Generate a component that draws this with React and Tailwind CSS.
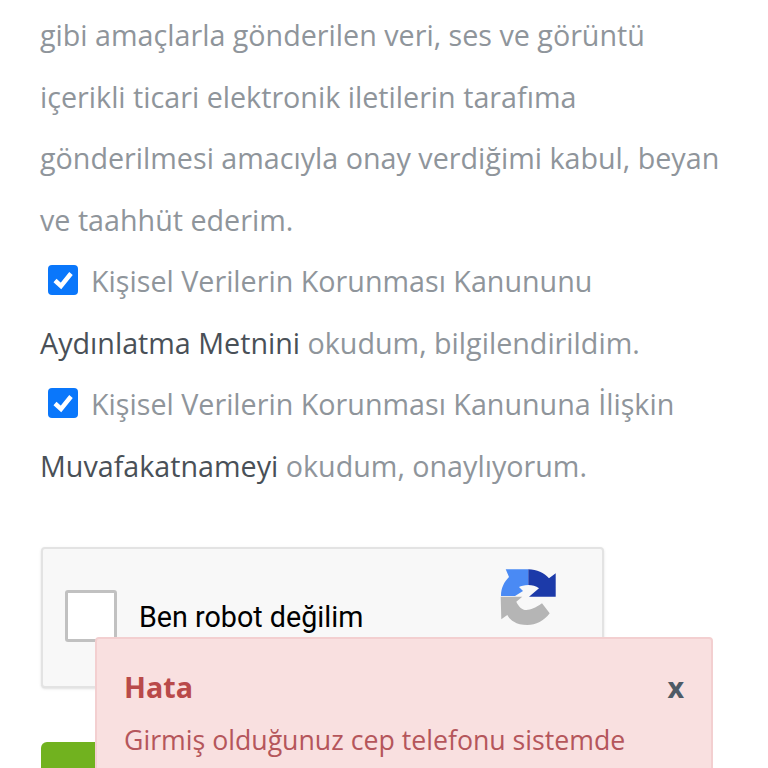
export default function App() {
  return (
    <div className="relative h-[768px] w-[768px] overflow-hidden bg-white font-['Open_Sans',sans-serif] text-[28.7px] leading-[61.5px] text-[#8f959b]">
      <div className="px-[40px] mt-[4px]">
        {/* Consent text */}
        <p>gibi amaçlarla gönderilen veri, ses ve görüntü</p>
        <p>içerikli ticari elektronik iletilerin tarafıma</p>
        <p>gönderilmesi amacıyla onay verdiğimi kabul, beyan</p>
        <p>ve taahhüt ederim.</p>
        <p>
          <Check />
          Kişisel Verilerin Korunması Kanununu
        </p>
        <p>
          <span className="text-[#495057]">Aydınlatma Metnini</span> okudum, bilgilendirildim.
        </p>
        <p>
          <Check />
          Kişisel Verilerin Korunması Kanununa İlişkin
        </p>
        <p>
          <span className="text-[#495057]">Muvafakatnameyi</span> okudum, onaylıyorum.
        </p>

        {/* reCAPTCHA */}
        <div className="ml-[1px] mt-[51px] flex h-[141px] w-[563px] items-start rounded-[4px] border-2 border-[#e3e3e3] bg-[#f8f8f8] shadow-sm">
          <div className="ml-[22px] mt-[41px] h-[52px] w-[52px] shrink-0 rounded-[3px] border-[3px] border-[#c1c1c1] bg-white" />
          <span className="ml-[22px] mt-[38px] whitespace-nowrap font-['Roboto',sans-serif] text-[28.7px] text-black">Ben robot değilim</span>
          <svg className="ml-[136px] mt-[19px] shrink-0" width="58" height="58" viewBox="0 0 58 58">
            <path d="M2 28 C2 20 5 14 10 9 L6.7 1.3 L29.3 1.3 L29.3 17 C25 17 22 18 20 19 L24 23 L16 28 Z" fill="#4a8af4" />
            <path d="M29.3 1.3 C38 1.3 45 5 50 10.3 L56.7 5.3 L56.7 28.7 L30 28.7 L40 20.3 C37 18 33 17 29.3 17 Z" fill="#1c3aa9" />
            <path d="M1.7 28.7 L23.3 28.7 L17.3 33.7 C20 39 23 42 27.3 42 C32 42 36 40 43 35.3 L50.7 45.3 C45 53 37 57 28.3 57 C23 57 18 56 15 53.7 C12 52 10 50 8.3 47 L2.3 51.3 Z" fill="#b5b5b5" />
          </svg>
        </div>

        {/* Submit button, cut off by the bottom of the screen */}
        <div className="ml-[1px] mt-[54px] h-[60px] w-[563px] rounded-[6px] bg-[#71b21f]" />
      </div>

      {/* Error toast */}
      <div className="absolute left-[95px] top-[637px] h-[180px] w-[618px] rounded-[4px] border-2 border-[#f3cfd0] bg-[#f9e0e0] px-[27px] pt-[19px]">
        <div className="flex items-center justify-between leading-[58px]">
          <span className="font-bold text-[#b94a4a]">Hata</span>
          <span className="font-bold text-[#4f5b66]">x</span>
        </div>
        <p className="mt-[-7px] text-[26.7px] text-[#b5565b]">Girmiş olduğunuz cep telefonu sistemde</p>
      </div>
    </div>
  );
}

function Check() {
  return (
    <span className="mb-[9px] ml-[8px] mr-[13px] inline-flex h-[30px] w-[30px] items-center justify-center rounded-[4px] bg-[#0a77fb] align-middle">
      <svg width="24" height="24" viewBox="0 0 24 24" fill="none">
        <path d="M4 12.5 L10 18 L20 5.5" stroke="white" strokeWidth="4.5" />
      </svg>
    </span>
  );
}
